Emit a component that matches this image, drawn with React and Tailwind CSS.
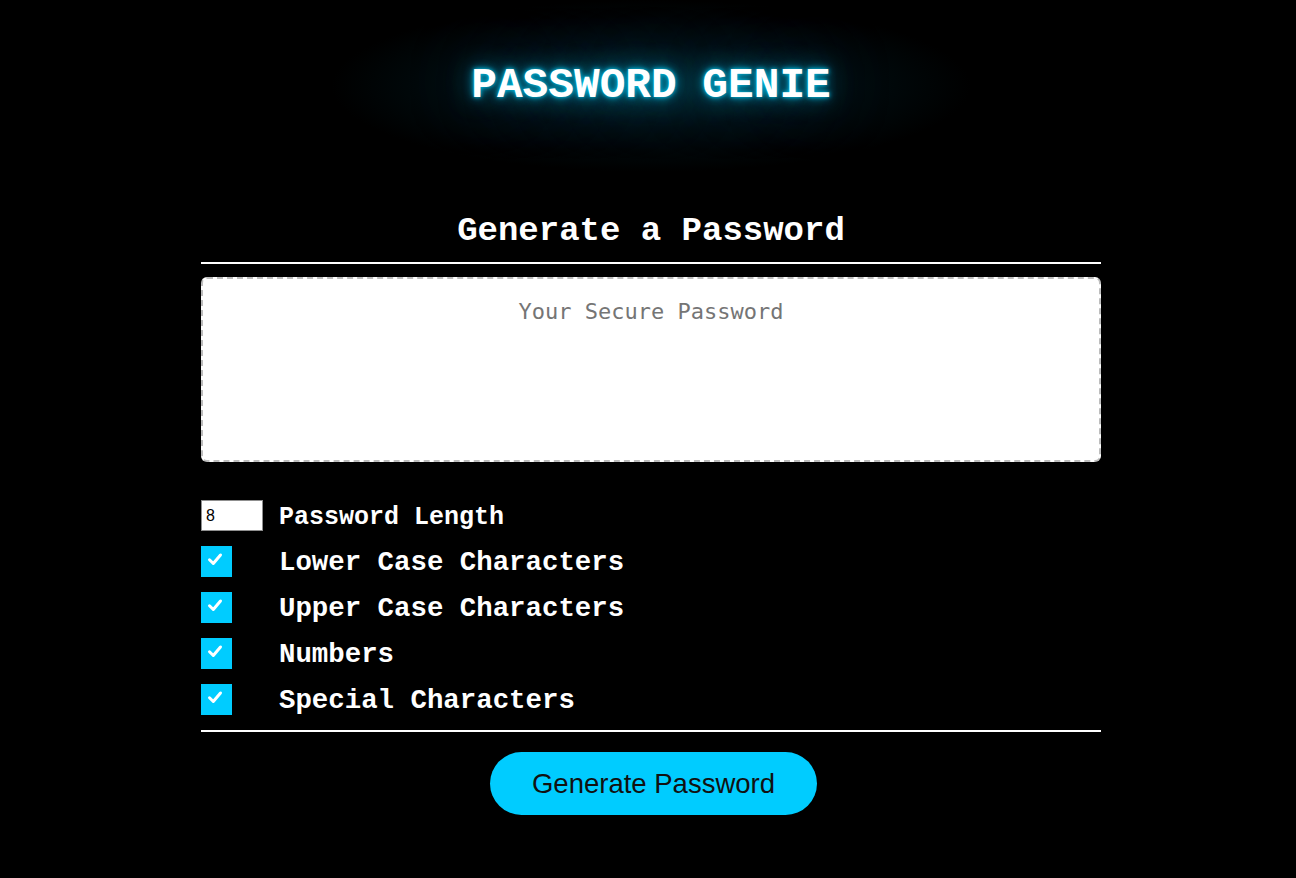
const OPTIONS = [
  "Lower Case Characters",
  "Upper Case Characters",
  "Numbers",
  "Special Characters",
];

function CheckBox() {
  return (
    <span className="flex h-[31px] w-[31px] shrink-0 bg-[#00ccff]">
      <svg width="31" height="31" viewBox="0 0 31 31">
        <path
          d="M8.5 13.8 L12.3 17.5 L19.5 9"
          fill="none"
          stroke="#ffffff"
          strokeWidth="3"
          strokeLinecap="round"
          strokeLinejoin="round"
        />
      </svg>
    </span>
  );
}

export default function App() {
  return (
    <div className="min-h-screen bg-black pl-[6px] pb-16 font-['Liberation_Mono',monospace] text-white">
      {/* Title with glow + soft halo behind */}
      <header className="flex justify-center bg-[radial-gradient(ellipse_320px_86px_at_50%_50%,rgba(0,50,62,0.8)_0%,rgba(0,30,38,0.5)_50%,rgba(0,0,0,0)_100%)] py-[62px]">
        <h1 className="text-[42.8px] font-bold leading-[48px] text-white [text-shadow:0_0_4px_#00c8f0,0_0_10px_#0094b8,0_0_24px_#006e8a,0_0_60px_#00485a]">
          PASSWORD GENIE
        </h1>
      </header>

      <main className="mx-auto mt-[39px] flex w-[900px] flex-col">
        <h2 className="text-center text-[34px] font-bold leading-[40px]">
          Generate a Password
        </h2>
        <div className="mt-[11px] h-[2px] bg-white" />

        <textarea
          readOnly
          placeholder="Your Secure Password"
          className="mt-[13px] h-[185px] w-full resize-none rounded-[6px] border-2 border-dashed border-[#bdbdbd] bg-white px-4 pt-[16px] text-center font-['DejaVu_Sans_Mono',monospace] text-[22px] text-black outline-none placeholder:text-[#757575]"
        />

        {/* Options */}
        <div className="mt-[38px] flex flex-col gap-[15px]">
          <div className="flex items-center">
            <input
              type="text"
              readOnly
              value="8"
              className="h-[31px] w-[62px] border border-[#8f8f8f] bg-white pl-[4px] font-['Liberation_Sans',sans-serif] text-[16px] text-black outline-none"
            />
            <span className="ml-[16px] mt-[4px] text-[25px] font-bold leading-none">
              Password Length
            </span>
          </div>
          {OPTIONS.map((label) => (
            <label key={label} className="flex items-center">
              <CheckBox />
              <span className="ml-[47px] mt-[2px] text-[27.4px] font-bold leading-none">
                {label}
              </span>
            </label>
          ))}
        </div>

        <div className="mt-[15px] h-[2px] bg-white" />

        <div className="mt-[20px] flex justify-center">
          <button className="ml-[5px] h-[63px] rounded-full bg-[#00ccff] px-[42px] font-['Liberation_Sans',sans-serif] text-[27.5px] text-[#111111]">
            Generate Password
          </button>
        </div>
      </main>
    </div>
  );
}
